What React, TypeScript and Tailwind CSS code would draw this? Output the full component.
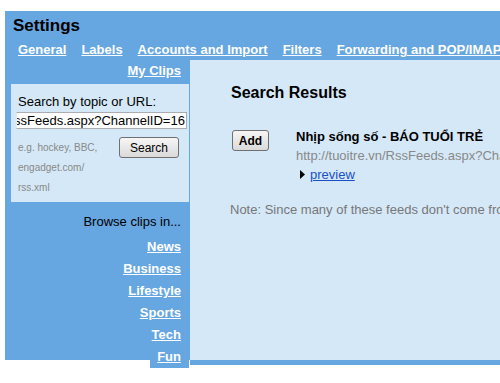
import React from "react";

const BLUE = "bg-[#66a6e1]";

const tabs = ["General", "Labels", "Accounts and Import", "Filters", "Forwarding and POP/IMAP", "Chat"];
const categories = ["News", "Business", "Lifestyle", "Sports", "Tech", "Fun"];

const App = () => {
  return (
    <div className="w-[500px] h-[383px] overflow-hidden bg-white font-['Liberation_Sans',Arial,sans-serif] text-black">
      <div className="w-[820px] pt-[11px] pl-[5px]">
        {/* Header */}
        <div className={`${BLUE} pl-[8px] pt-[5px] pb-[3px]`}>
          <h1 className="text-[17px] leading-[20px] font-bold">Settings</h1>
          <div className="mt-[6px] pl-[5px] flex gap-[15px] whitespace-nowrap text-[13px] leading-[15px] font-bold text-white">
            {tabs.map((t) => (
              <a key={t} className="underline cursor-pointer">
                {t}
              </a>
            ))}
          </div>
        </div>

        <div className="flex items-start">
          {/* Left column */}
          <div className={`${BLUE} w-[185px] h-[300px] shrink-0 flex flex-col pr-[1px]`}>
            <div className="shrink-0 h-[24px] pt-[3px] pr-[8px] text-right text-[13px] leading-[15px] font-bold text-white">
              <a className="underline">My Clips</a>
            </div>

            <div className="shrink-0 ml-[6px] h-[118px] bg-[#d5e8f7] pl-[5px] pt-[10px]">
              <div className="ml-[2px] text-[13px] leading-[15px]">Search by topic or URL:</div>
              <div className="mt-[3px] w-[171px] h-[17px] bg-white border border-[#abadb3] border-l-[#e3e9ef] overflow-hidden">
                <div className="ml-[-3px] whitespace-nowrap text-[13px] leading-[15px]">
                  ssFeeds.aspx?ChannelID=16
                </div>
              </div>
              <div className="mt-[8px] flex items-start">
                <div className="ml-[2px] w-[101px] text-[10px] leading-[20px] text-[#888] mt-[1px]">
                  e.g. hockey, BBC,
                  <br />
                  engadget.com/
                  <br />
                  rss.xml
                </div>
                <button className="w-[60px] h-[21px] rounded-[3px] border border-[#707070] bg-linear-to-b from-[#f6f6f6] to-[#dadada] text-[12px] leading-[14px] text-black">
                  Search
                </button>
              </div>
            </div>

            <div className="shrink-0 mt-[12px] pr-[8px] text-right text-[13px] leading-[15px]">Browse clips in...</div>
            <div className="shrink-0 mt-[7px] flex flex-col items-end">
              {categories.map((c) => (
                <a
                  key={c}
                  className={`${BLUE} pl-[7px] pr-[8px] text-[13px] leading-[22px] font-bold text-white underline`}
                >
                  {c}
                </a>
              ))}
            </div>
          </div>

          {/* Right content */}
          <div className={`${BLUE} flex-1 pb-[5px]`}>
            <div className="h-[300px] bg-[#d5e8f7] pl-[40px] pt-[23px] whitespace-nowrap">
              <h2 className="text-[16px] leading-[19px] font-bold ml-[1px]">Search Results</h2>

              <div className="mt-[25px] flex items-start">
                <button className="mt-[3px] ml-[2px] w-[37px] h-[21px] rounded-[3px] border border-[#707070] bg-linear-to-b from-[#f6f6f6] to-[#dadada] text-[12px] leading-[14px] font-bold">
                  Add
                </button>
                <div className="ml-[27px] text-[13px] leading-[19px]">
                  <div className="font-bold">Nhịp sống số - BÁO TUỔI TRẺ</div>
                  <div className="text-[#888]">http://tuoitre.vn/RssFeeds.aspx?ChannelID=16</div>
                  <div className="flex items-center pl-[4px] gap-[5px]">
                    <svg width="5" height="9" viewBox="0 0 5 9">
                      <polygon points="0,0 5,4.5 0,9" fill="#000" />
                    </svg>
                    <a className="text-[#1a4fc9] underline">preview</a>
                  </div>
                </div>
              </div>

              <p className="mt-[18px] text-[13px] leading-[15px] text-[#777]">
                Note: Since many of these feeds don't come from Google, we can't guarantee their content.
              </p>
            </div>
          </div>
        </div>
      </div>
    </div>
  );
};

export default App;
